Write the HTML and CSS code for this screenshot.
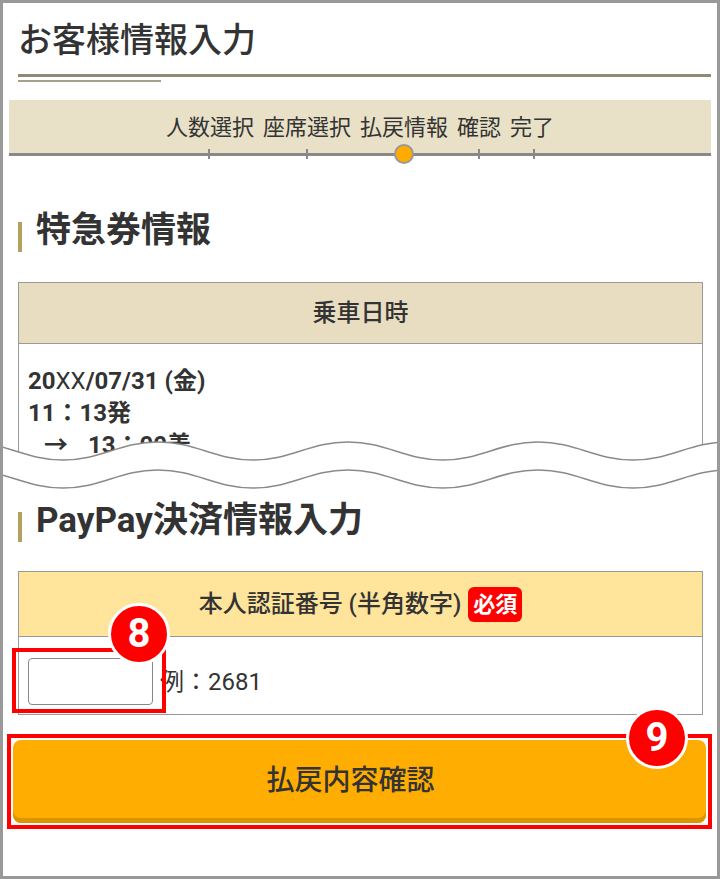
FILE: index.html
```html
<!DOCTYPE html>
<html lang="ja">
<head>
    <meta charset="UTF-8">
    <meta name="viewport" content="width=device-width, initial-scale=1.0">
    <title>お客様情報入力</title>
    <link rel="stylesheet" href="styles.css">
</head>
<body>
    <div class="frame">
        <h1 class="page-title">お客様情報入力</h1>
        <div class="subline"></div>

        <ol class="steps">
            <li>人数選択</li>
            <li>座席選択</li>
            <li class="current">払戻情報</li>
            <li>確認</li>
            <li>完了</li>
        </ol>

        <h2 class="sec-title first">特急券情報</h2>
        <div class="card cut">
            <div class="card-head">乗車日時</div>
            <div class="card-body">
                <p>20<span class="ph">XX</span>/07/31 (金)</p>
                <p>11：13発</p>
                <p><span class="arrow">→</span>13：00着</p>
            </div>
        </div>

        <!-- page break mark -->
        <svg class="wave" width="714" height="60" viewBox="0 0 714 60">
            <path d="M-35 6C3 6 22 24 60 24S117 6 155 6S212 24 250 24S307 6 345 6S402 24 440 24S497 6 535 6S592 24 630 24S687 6 725 6V60H-35Z" fill="#fff"/>
            <path d="M-35 6C3 6 22 24 60 24S117 6 155 6S212 24 250 24S307 6 345 6S402 24 440 24S497 6 535 6S592 24 630 24S687 6 725 6" fill="none" stroke="#8a8a8a" stroke-width="1.5"/>
            <path d="M-35 34C3 34 22 52 60 52S117 34 155 34S212 52 250 52S307 34 345 34S402 52 440 52S497 34 535 34S592 52 630 52S687 34 725 34" fill="none" stroke="#8a8a8a" stroke-width="1.5"/>
        </svg>

        <h2 class="sec-title second">PayPay決済情報入力</h2>
        <div class="card">
            <div class="card-head pay">本人認証番号 (半角数字)<span class="req">必須</span></div>
            <div class="card-body pin-row">
                <input class="pin" type="tel">
                <span class="example">例：2681</span>
                <span class="mark8"></span>
                <span class="num n8">8</span>
            </div>
        </div>

        <div class="btn-mark">
            <button class="btn" type="button">払戻内容確認</button>
            <span class="num n9">9</span>
        </div>
    </div>
</body>
</html>
```

FILE: styles.css
```css
body { margin: 0; font-family: Roboto, "Noto Sans CJK JP", sans-serif; color: #333; background: #fff; }
.frame { box-sizing: border-box; height: 879px; border: 3px solid #999; overflow: hidden; }

.page-title { margin: 16px 6px 0 15px; padding-bottom: 13px; font-size: 34px; font-weight: 500; line-height: 42px; border-bottom: 3px solid #8f8a77; }
.subline { width: 143px; height: 2px; margin: 3px 0 0 15px; background: #a5a08c; }

.steps { list-style: none; margin: 18px 6px 0 6px; padding: 0 0 4px; height: 49px; background: #e9e1c7; border-bottom: 3px solid #888; display: flex; justify-content: center; gap: 9px; font-size: 22px; }
.steps li { position: relative; display: flex; align-items: center; }
.steps li::after { content: ""; position: absolute; left: 50%; top: 49px; width: 2px; height: 10px; margin-left: -1px; background: #888; }
.steps li:first-child::after { margin-left: -2px; }
.steps li:last-child::after { margin-left: 1px; }
.steps li.current::after { top: 44px; width: 16px; height: 16px; margin-left: -10px; border-radius: 50%; background: #ffab00; border: 2px solid #999; }

.sec-title { display: flex; margin: 0 0 0 15px; font-size: 35px; font-weight: 700; line-height: 42px; }
.sec-title::before { content: ""; flex: none; width: 4px; height: 30px; margin: 12px 14px 0 0; background: #b3a160; }
.sec-title.first { margin-top: 54px; margin-bottom: 30px; }
.sec-title.second { margin-top: 4px; margin-bottom: 29px; }

.card { margin: 0 14px 0 15px; border: 1px solid #999; }
.card.cut { height: 190px; overflow: hidden; }
.card-head { background: #e8ddc0; text-align: center; font-size: 24px; font-weight: 500; line-height: 60px; border-bottom: 1px solid #999; }
.card-head.pay { display: flex; justify-content: center; align-items: center; height: 64px; background: #ffe49c; }
.card-body { padding: 21px 9px; font-size: 24px; line-height: 32px; }
.card-body p { margin: 0; font-weight: 700; }
.ph { font-weight: 400; }
.arrow { margin: 0 20px 0 16px; }

.req { display: inline-block; margin-left: 7px; padding: 0 5px; border-radius: 6px; background: #f00; color: #fff; font-size: 22px; font-weight: 700; line-height: 35px; }

.wave { display: block; margin-top: -38px; }

.pin-row { position: relative; display: flex; align-items: center; gap: 7px; padding: 21px 9px 9px; }
.pin { box-sizing: border-box; width: 125px; height: 47px; margin: 0; padding: 0; border: 1px solid #888; border-radius: 4px; }
.mark8 { position: absolute; left: -7px; top: 11px; box-sizing: border-box; width: 154px; height: 65px; border: 4px solid #f00; }

.num { position: absolute; box-sizing: border-box; width: 62px; height: 62px; border: 3px solid #fff; border-radius: 50%; background: #f00; color: #fff; font: 700 40px/56px Roboto, sans-serif; text-align: center; }
.n8 { left: 89px; top: -34px; }
.n9 { left: 615px; top: -31px; }

.btn-mark { position: relative; margin: 19px 5px 0 4px; padding: 2px; border: 4px solid #f00; }
.btn { display: block; width: 100%; height: 83px; padding: 0 18px 8px 0; border: 0; border-radius: 8px; background: #ffad00; box-shadow: inset 0 -5px 0 #dc9400; color: #333; font: 500 28px Roboto, "Noto Sans CJK JP", sans-serif; }
```
